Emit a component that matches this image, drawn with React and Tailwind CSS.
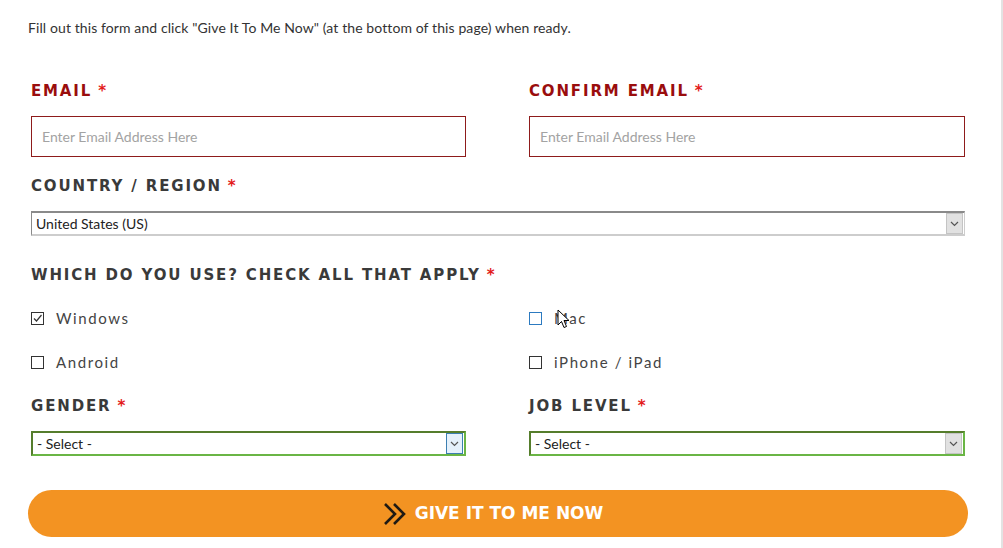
import React from "react";

const labelFont = { fontFamily: '"DejaVu Sans", "Open Sans", sans-serif' };

function Label({ children, red }) {
  return (
    <div
      className={`h-[20px] pt-[2px] flex items-center text-[15px] font-bold tracking-[1.85px] ${red ? "text-[#9a0d0d]" : "text-[#3a3a3a]"}`}
      style={labelFont}
    >
      <span>{children}</span>
      <span className="ml-[6px] text-[#e31b1b]">*</span>
    </div>
  );
}

function EmailInput() {
  return (
    <div className="h-[41px] border border-[#8e1b1b] bg-white flex items-center pl-[10px] text-[14px] text-[#a3a3a3] font-['Lato',sans-serif]">
      Enter Email Address Here
    </div>
  );
}

function Chevron() {
  return (
    <svg width="9" height="6" viewBox="0 0 9 6" fill="none">
      <path d="M1 1 L4.5 4.5 L8 1" stroke="#555" strokeWidth="1.2" />
    </svg>
  );
}

function Select({ text, green, hover }) {
  const border = green
    ? "border-t-2 border-l-2 border-t-[#557d2c] border-l-[#557d2c] border-b-2 border-r-2 border-b-[#6ab545] border-r-[#6ab545]"
    : "border-t-2 border-l border-t-[#8a8a8a] border-l-[#8a8a8a] border-b-2 border-r border-b-[#cdcdcd] border-r-[#cdcdcd]";
  return (
    <div className={`h-[25px] bg-white flex items-center justify-between ${border}`}>
      <span className="pl-[4px] text-[14px] text-[#222] font-['Lato',sans-serif]">{text}</span>
      <div
        className={`h-[21px] w-[17px] mr-[1px] flex items-center justify-center border ${hover ? "bg-[#e5f1fb] border-[#3c7fb1]" : "bg-[#e1e1e1] border-[#c4c4c4]"}`}
      >
        <Chevron />
      </div>
    </div>
  );
}

function Check({ label, checked, blue, cursor }) {
  return (
    <div className="h-[20px] flex items-center relative">
      <div
        className={`w-[13px] h-[13px] border bg-white flex items-center justify-center ${blue ? "border-[#2c7ac0]" : "border-[#333]"}`}
      >
        {checked && (
          <svg width="11" height="11" viewBox="0 0 11 11" fill="none">
            <path d="M2 5.5 L4.5 8 L9.5 2" stroke="#333" strokeWidth="1.2" />
          </svg>
        )}
      </div>
      <span className="ml-[12px] text-[15px] tracking-[1.6px] text-[#444] font-['Lato',sans-serif]">{label}</span>
      {cursor && (
        <svg className="absolute left-[28px] top-[1px]" width="14" height="21" viewBox="0 0 14 21">
          <path
            d="M1 1 L1 16 L4.5 12.5 L7 18.5 L9.5 17.5 L7 11.5 L12 11.5 Z"
            fill="#fff"
            stroke="#000"
            strokeWidth="1"
            strokeLinejoin="round"
          />
        </svg>
      )}
    </div>
  );
}

export default function App() {
  return (
    <div className="w-[1003px] h-[548px] bg-white overflow-hidden flex">
      <div className="w-[1001px] px-[28px] pt-[17px]">
        <div className="h-[20px] flex items-center text-[14px] tracking-[0.1px] text-[#333] font-['Lato',sans-serif]">
          Fill out this form and click "Give It To Me Now" (at the bottom of this page) when ready.
        </div>

        <div className="ml-[3px] w-[934px]">
          <div className="mt-[43px] grid grid-cols-[435px_436px] gap-x-[63px]">
            <div>
              <Label red>EMAIL</Label>
              <div className="mt-[16px]">
                <EmailInput />
              </div>
            </div>
            <div>
              <Label red>CONFIRM EMAIL</Label>
              <div className="mt-[16px]">
                <EmailInput />
              </div>
            </div>
          </div>

          <div className="mt-[18px]">
            <Label>COUNTRY / REGION</Label>
            <div className="mt-[16px]">
              <Select text="United States (US)" />
            </div>
          </div>

          <div className="mt-[28px]">
            <Label>WHICH DO YOU USE? CHECK ALL THAT APPLY</Label>
            <div className="mt-[24px] grid grid-cols-[435px_436px] gap-x-[63px] gap-y-[24px]">
              <Check label="Windows" checked />
              <Check label="Mac" blue cursor />
              <Check label="Android" />
              <Check label="iPhone / iPad" />
            </div>
          </div>

          <div className="mt-[23px] grid grid-cols-[435px_436px] gap-x-[63px]">
            <div>
              <Label>GENDER</Label>
              <div className="mt-[16px]">
                <Select text="- Select -" green hover />
              </div>
            </div>
            <div>
              <Label>JOB LEVEL</Label>
              <div className="mt-[16px]">
                <Select text="- Select -" green />
              </div>
            </div>
          </div>
        </div>

        <div className="mt-[34px] w-[940px] h-[47px] rounded-full bg-[#f39322] flex items-center justify-center gap-[8px] pr-[10px]">
          <svg width="24" height="24" viewBox="0 0 24 24" fill="none">
            <path d="M2 2 L12 12 L2 22" stroke="#1f1a14" strokeWidth="2.6" />
            <path d="M11 2 L21 12 L11 22" stroke="#1f1a14" strokeWidth="2.6" />
          </svg>
          <span className="text-[17px] font-bold text-white tracking-[0px]" style={labelFont}>
            GIVE IT TO ME NOW
          </span>
        </div>
      </div>
      <div className="w-[2px] h-full bg-[#e3e3e3]" />
    </div>
  );
}
